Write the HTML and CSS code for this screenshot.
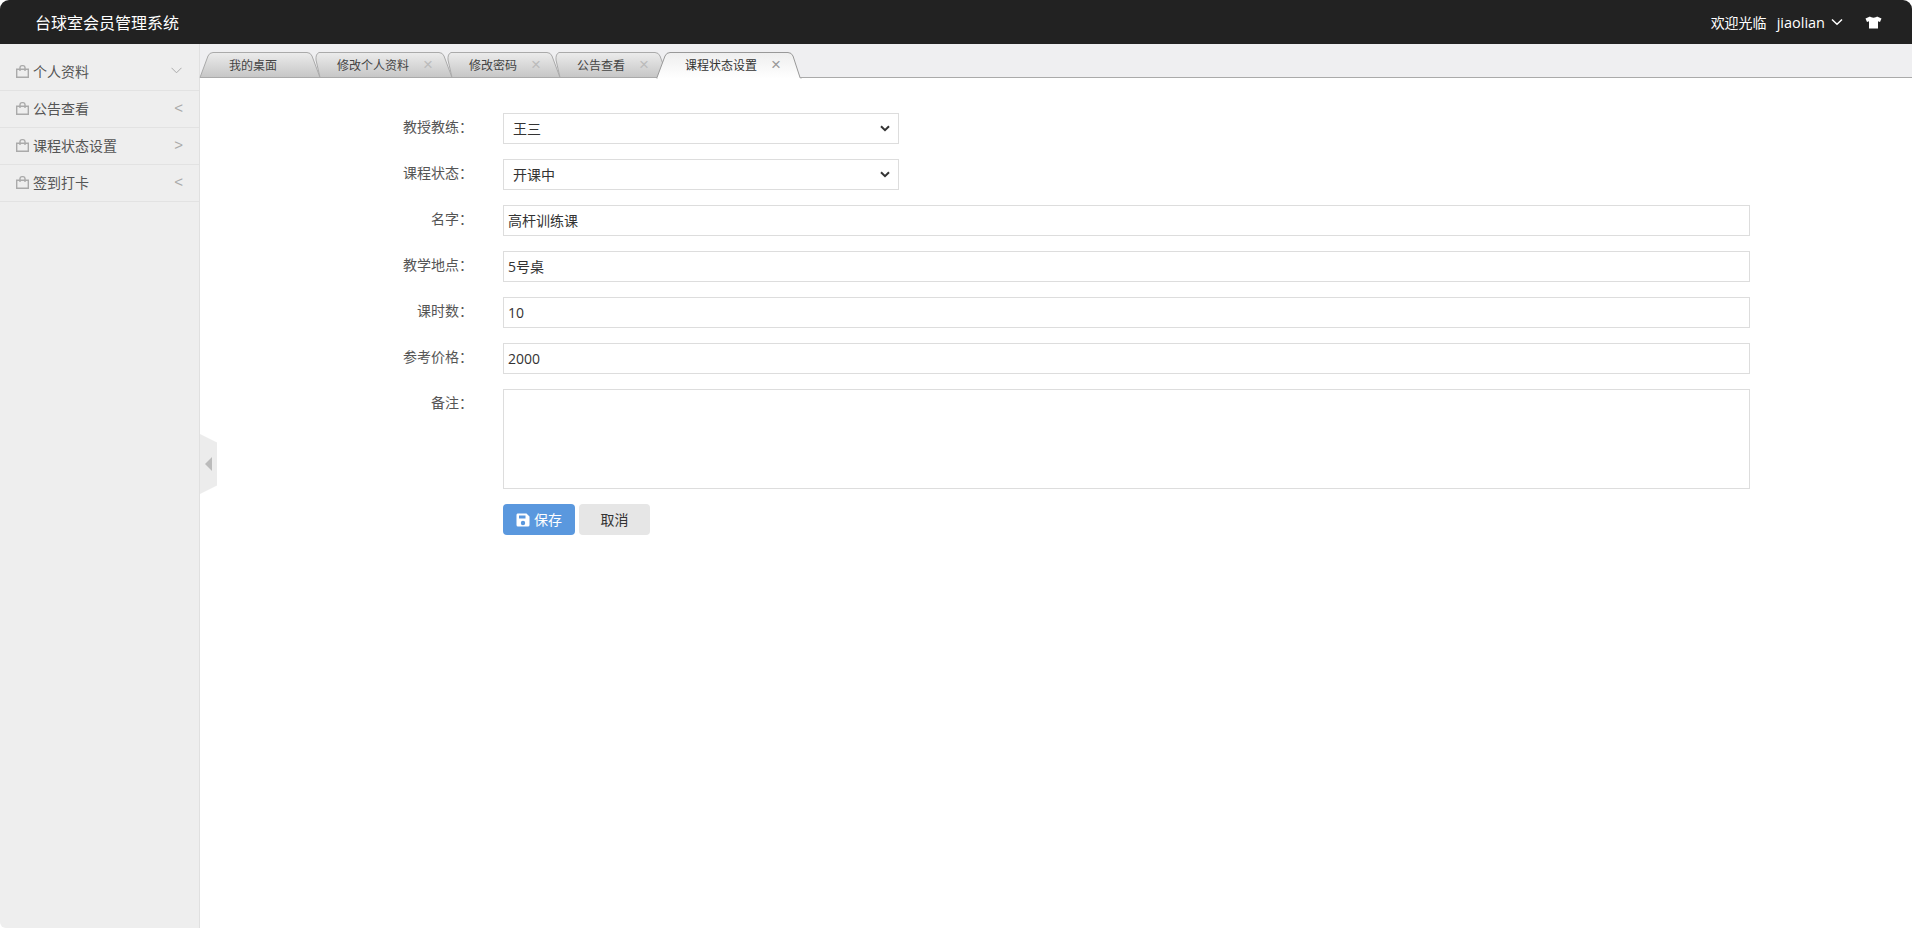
FILE: index.html
```html
<!DOCTYPE html>
<html lang="zh-CN">
<head>
<meta charset="utf-8">
<title>台球室会员管理系统</title>
<link rel="stylesheet" href="styles.css">
</head>
<body>
<header class="topbar">
  <div class="brand">台球室会员管理系统</div>
  <div class="user">
    <span class="welcome">欢迎光临</span>
    <span class="username">jiaolian</span>
    <svg class="caret" width="12" height="8" viewBox="0 0 12 8"><path d="M1 1.5 L6 6.3 L11 1.5" fill="none" stroke="#fff" stroke-width="1.5"/></svg>
    <svg class="shirt" width="17" height="13" viewBox="0 0 17 13"><path d="M5 0.5 C6 2 11 2 12 0.5 L16.5 2.5 L15 6 L13 5.3 L13 12.5 L4 12.5 L4 5.3 L2 6 L0.5 2.5 Z" fill="#fff"/></svg>
  </div>
</header>
<div class="main">
  <aside class="sidebar">
    <ul class="menu">
      <li class="menu-item">
        <svg class="bag" width="13" height="13" viewBox="0 0 13 13"><path d="M0.7 4.2 H12.3 V12.3 H0.7 Z M4 6 V2.6 C4 0 9 0 9 2.6 V6" fill="none" stroke="#aaa" stroke-width="1.4"/></svg>
        <span class="menu-label">个人资料</span>
        <svg class="menu-v" width="11" height="7" viewBox="0 0 11 7"><path d="M0.5 0.8 L5.5 5.8 L10.5 0.8" fill="none" stroke="#aaa" stroke-width="1"/></svg>
      </li>
      <li class="menu-item">
        <svg class="bag" width="13" height="13" viewBox="0 0 13 13"><path d="M0.7 4.2 H12.3 V12.3 H0.7 Z M4 6 V2.6 C4 0 9 0 9 2.6 V6" fill="none" stroke="#aaa" stroke-width="1.4"/></svg>
        <span class="menu-label">公告查看</span>
        <span class="menu-arrow">&lt;</span>
      </li>
      <li class="menu-item">
        <svg class="bag" width="13" height="13" viewBox="0 0 13 13"><path d="M0.7 4.2 H12.3 V12.3 H0.7 Z M4 6 V2.6 C4 0 9 0 9 2.6 V6" fill="none" stroke="#aaa" stroke-width="1.4"/></svg>
        <span class="menu-label">课程状态设置</span>
        <span class="menu-arrow">&gt;</span>
      </li>
      <li class="menu-item">
        <svg class="bag" width="13" height="13" viewBox="0 0 13 13"><path d="M0.7 4.2 H12.3 V12.3 H0.7 Z M4 6 V2.6 C4 0 9 0 9 2.6 V6" fill="none" stroke="#aaa" stroke-width="1.4"/></svg>
        <span class="menu-label">签到打卡</span>
        <span class="menu-arrow">&lt;</span>
      </li>
    </ul>
  </aside>
  <section class="content">
    <div class="handle"><span class="handle-tri"></span></div>
    <nav class="tabs">
      <div class="tab tab-first">
        <svg class="tab-bg" width="120" height="26" viewBox="0 0 120 26">
          <defs>
            <linearGradient id="grey" x1="0" y1="0" x2="0" y2="1"><stop offset="0" stop-color="#ececec"/><stop offset="1" stop-color="#c6c6c6"/></linearGradient>
            <linearGradient id="light" x1="0" y1="0" x2="0" y2="1"><stop offset="0" stop-color="#eeeeee"/><stop offset="1" stop-color="#ffffff"/></linearGradient>
          </defs>
          <path d="M0 25.5 L8 4 Q9.500 0.500 13 0.500 H107 Q110.500 0.500 112 4 L120 25.500 Z" fill="url(#grey)" stroke="#aaa"/>
        </svg>
        <span class="tab-text">我的桌面</span>
      </div>
      <div class="tab">
        <svg class="tab-bg" width="134" height="26" viewBox="0 0 134 26">
          <path d="M2 25.500 L-2 8 Q-2.500 2 1 0.500 H121 Q124.500 0.500 126 4 L134 25.500 Z" fill="url(#grey)" stroke="#aaa"/>
        </svg>
        <span class="tab-text">修改个人资料</span><span class="tab-x">×</span>
      </div>
      <div class="tab">
        <svg class="tab-bg" width="110" height="26" viewBox="0 0 110 26">
          <path d="M2 25.500 L-2 8 Q-2.500 2 1 0.500 H97 Q100.500 0.500 102 4 L110 25.500 Z" fill="url(#grey)" stroke="#aaa"/>
        </svg>
        <span class="tab-text">修改密码</span><span class="tab-x">×</span>
      </div>
      <div class="tab tab-fourth">
        <svg class="tab-bg" width="110" height="26" viewBox="0 0 110 26">
          <path d="M2 25.500 L-2 8 Q-2.500 2 1 0.500 H97 Q100.500 0.500 102 4 L110 25.500 Z" fill="url(#grey)" stroke="#aaa"/>
        </svg>
        <span class="tab-text">公告查看</span><span class="tab-x">×</span>
      </div>
      <div class="tab tab-active">
        <svg class="tab-bg" width="144" height="27" viewBox="0 0 144 27">
          <path d="M0 26.500 V25.500 L8 4 Q9.500 0.500 13 0.500 H131 Q134.500 0.500 136 4 L143 25.500 L144 26.500" fill="url(#light)" stroke="#999"/>
        </svg>
        <span class="tab-text">课程状态设置</span><span class="tab-x">×</span>
      </div>
    </nav>
    <form class="form">
      <div class="row">
        <label class="label">教授教练：</label>
        <select class="field select"><option>王三</option></select>
      </div>
      <div class="row">
        <label class="label">课程状态：</label>
        <select class="field select"><option>开课中</option></select>
      </div>
      <div class="row">
        <label class="label">名字：</label>
        <input class="field input" type="text" value="高杆训练课">
      </div>
      <div class="row">
        <label class="label">教学地点：</label>
        <input class="field input" type="text" value="5号桌">
      </div>
      <div class="row">
        <label class="label">课时数：</label>
        <input class="field input input-num" type="text" value="10">
      </div>
      <div class="row">
        <label class="label">参考价格：</label>
        <input class="field input input-num" type="text" value="2000">
      </div>
      <div class="row">
        <label class="label">备注：</label>
        <textarea class="field textarea"></textarea>
      </div>
      <div class="row">
        <span class="label"></span>
        <div class="actions">
          <button class="btn btn-save" type="button">
            <svg class="save-icon" width="14" height="14" viewBox="0 0 14 14"><path fill-rule="evenodd" d="M1.500 0.500 H10.500 L13.500 3.500 V12 Q13.500 13.500 12 13.500 H2 Q0.500 13.500 0.500 12 V2 Q0.500 0.500 1.500 0.500 Z M3 2.500 V5.500 H9.500 V2.500 Z M7 7.800 A2.200 2.200 0 1 0 7 12.200 A2.200 2.200 0 1 0 7 7.800 Z" fill="#fff"/></svg>
            <span>保存</span>
          </button>
          <button class="btn btn-cancel" type="button">取消</button>
        </div>
      </div>
    </form>
  </section>
</div>
</body>
</html>
```
FILE: styles.css
```css
* { box-sizing: border-box; }
html, body { height: 100%; }
body {
  margin: 0;
  height: 928px;
  overflow: hidden;
  background: #fff;
  color: #333;
  font-family: "Noto Sans CJK SC", "Noto Sans", sans-serif;
  font-size: 14px;
  display: flex;
  flex-direction: column;
}
.topbar {
  height: 44px;
  flex: none;
  background: #222;
  color: #fff;
  border-radius: 9px 9px 0 0;
  display: flex;
  align-items: center;
  justify-content: space-between;
  padding: 0 30px 0 35px;
}
.brand { font-size: 16px; line-height: 44px; }
.user { display: flex; align-items: center; }
.welcome { font-size: 14px; }
.username { margin-left: 10px; font-family: "Open Sans", sans-serif; font-size: 14.5px; }
.caret { margin-left: 6px; }
.shirt { margin-left: 22px; }

.main { flex: 1; display: flex; min-height: 0; }
.sidebar {
  width: 200px;
  flex: none;
  background: #eee;
  border-right: 1px solid #e0e0e0;
  border-bottom-left-radius: 6px;
  padding-top: 10px;
}
.menu { list-style: none; margin: 0; padding: 0; }
.menu-item {
  height: 37px;
  border-bottom: 1px solid #e2e2e2;
  display: flex;
  align-items: center;
  padding: 0 16px 2px;
  color: #555;
}
.menu-label { margin-left: 4px; flex: 1; }
.bag { flex: none; margin-top: 1px; }
.menu-v { flex: none; margin: -2px 1px 0 0; }
.menu-arrow { color: #aaa; font-family: "Liberation Sans", sans-serif; font-size: 15px; margin: -2px 0 0 0; }

.content { flex: 1; position: relative; min-width: 0; }
.handle {
  position: absolute;
  left: 0;
  top: 390px;
  width: 17px;
  height: 60px;
  background: #ececec;
  clip-path: polygon(0 0, 100% 14%, 100% 86%, 0 100%);
}
.handle-tri {
  position: absolute;
  left: 5px;
  top: 23px;
  border-style: solid;
  border-width: 7px 7px 7px 0;
  border-color: transparent #bbb transparent transparent;
}
.tabs {
  height: 34px;
  padding-top: 8px;
  background: #efeff1;
  border-bottom: 1px solid #aaa;
  display: flex;
  align-items: flex-start;
}
.tab {
  position: relative;
  height: 26px;
  display: flex;
  align-items: center;
  padding: 0 19px 2px;
  margin-left: -2px;
  font-size: 12px;
  color: #444;
}
.tab-bg { position: absolute; left: 0; top: 0; overflow: visible; }
.tab-text, .tab-x { position: relative; }
.tab-first { margin-left: 0; padding: 0 43px 2px 29px; }
.tab-x {
  width: 10px;
  margin: 2px 0 0 14px;
  text-align: center;
  font-family: "Liberation Sans", sans-serif;
  font-size: 17px;
  color: #bbb;
}
.tab-active {
  margin-left: -11px;
  padding-left: 28px;
  padding-right: 20px;
  color: #333;
}
.tab-active .tab-x { color: #999; }

.form {
  padding: 35px 0 0 193px;
  display: flex;
  flex-direction: column;
  gap: 15px;
}
.row { display: flex; align-items: flex-start; }
.label {
  width: 80px;
  flex: none;
  margin-right: 30px;
  text-align: right;
  line-height: 26px;
  color: #555;
}
.field {
  display: block;
  border: 1px solid #ddd;
  background-color: #fff;
  color: #333;
  font-family: "Noto Sans CJK SC", "Noto Sans", sans-serif;
  font-size: 14px;
  border-radius: 0;
  outline: none;
}
.select {
  width: 396px;
  height: 31px;
  padding: 0 5px 2px 9px;
  appearance: none;
  background-image: url("data:image/svg+xml;utf8,<svg xmlns='http://www.w3.org/2000/svg' width='10' height='7' viewBox='0 0 10 7'><path d='M1 1.200 L5 5.200 L9 1.200' fill='none' stroke='%23333' stroke-width='2'/></svg>");
  background-repeat: no-repeat;
  background-position: right 8px center;
}
.input {
  width: 1247px;
  height: 31px;
  padding: 0 4px 2px 4px;
  font-family: "Open Sans", "Noto Sans CJK SC", sans-serif;
}
.input-num { padding-bottom: 0; }
.textarea { width: 1247px; height: 100px; padding: 4px; resize: none; }
.actions { display: flex; gap: 4px; }
.btn {
  height: 31px;
  border: 0;
  border-radius: 4px;
  font-family: "Noto Sans CJK SC", "Noto Sans", sans-serif;
  font-size: 14px;
  padding: 0 0 2px;
  display: flex;
  align-items: center;
  justify-content: center;
}
.btn-save { width: 72px; background: #5a98de; color: #fff; gap: 4px; }
.save-icon { margin-top: 2px; }
.btn-cancel { width: 71px; background: #e6e6e6; color: #333; }
```
